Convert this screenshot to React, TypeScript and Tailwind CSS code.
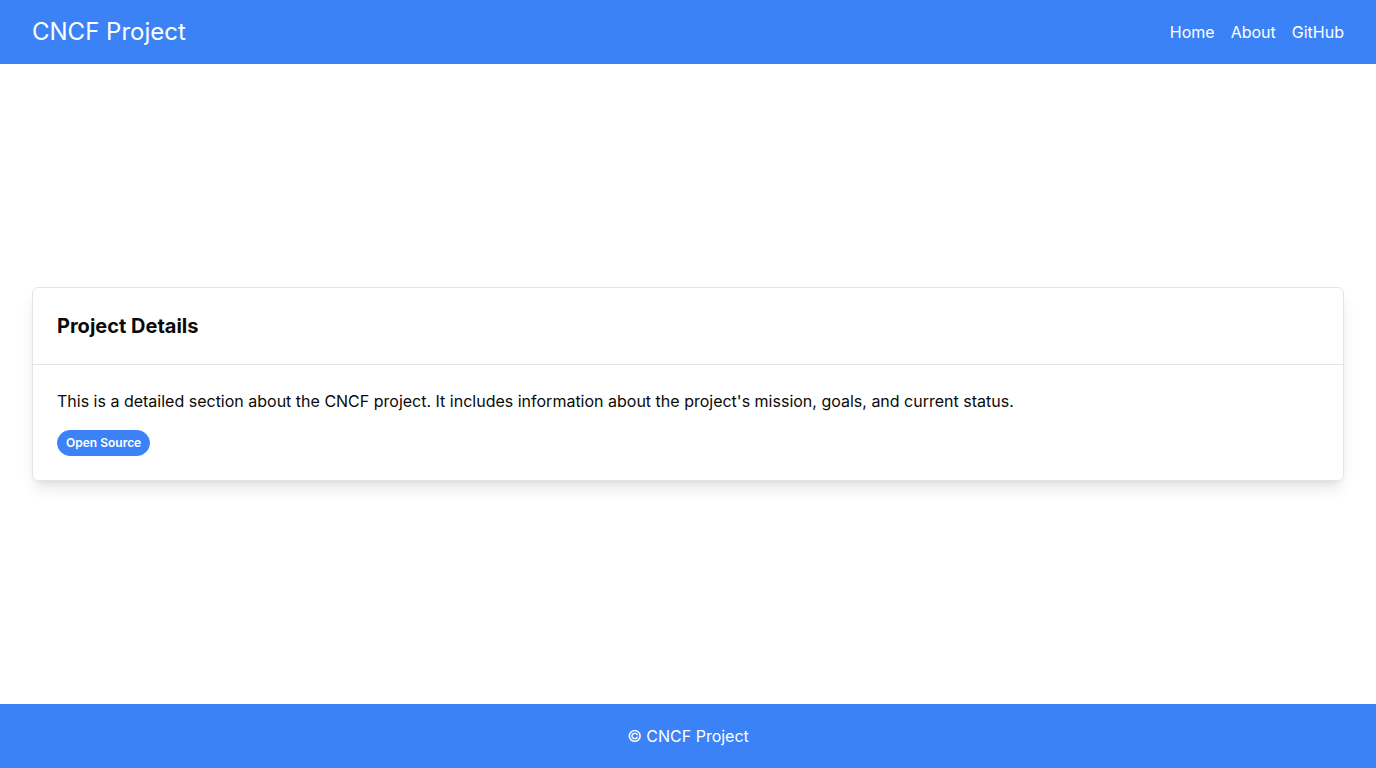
const links = ["Home", "About", "GitHub"];

export default function App() {
  return (
    <div className="flex min-h-screen flex-col bg-white font-['Inter',sans-serif] text-base text-[#0a0a0a]">
      <header className="flex h-16 items-center justify-between bg-[#3b82f6] px-8 text-white">
        <h1 className="text-2xl">CNCF Project</h1>
        <nav className="flex gap-4">
          {links.map((label) => (
            <a key={label} href={`#${label.toLowerCase()}`}>
              {label}
            </a>
          ))}
        </nav>
      </header>

      <main className="flex flex-1 items-center p-8">
        <section className="w-full rounded-md border border-[#e5e5e5] bg-white shadow-lg">
          <div className="border-b border-[#e5e5e5] p-6">
            <h2 className="text-xl font-bold">Project Details</h2>
          </div>
          <div className="p-6">
            <p className="mb-4">
              This is a detailed section about the CNCF project. It includes information about the project's mission,
              goals, and current status.
            </p>
            <span className="inline-flex items-center rounded-full border border-[#3b82f6] bg-[#3b82f6] px-2 py-1 text-xs font-semibold text-white">
              Open Source
            </span>
          </div>
        </section>
      </main>

      <footer className="flex h-16 items-center justify-center bg-[#3b82f6] text-white">
        <p>© CNCF Project</p>
      </footer>
    </div>
  );
}
